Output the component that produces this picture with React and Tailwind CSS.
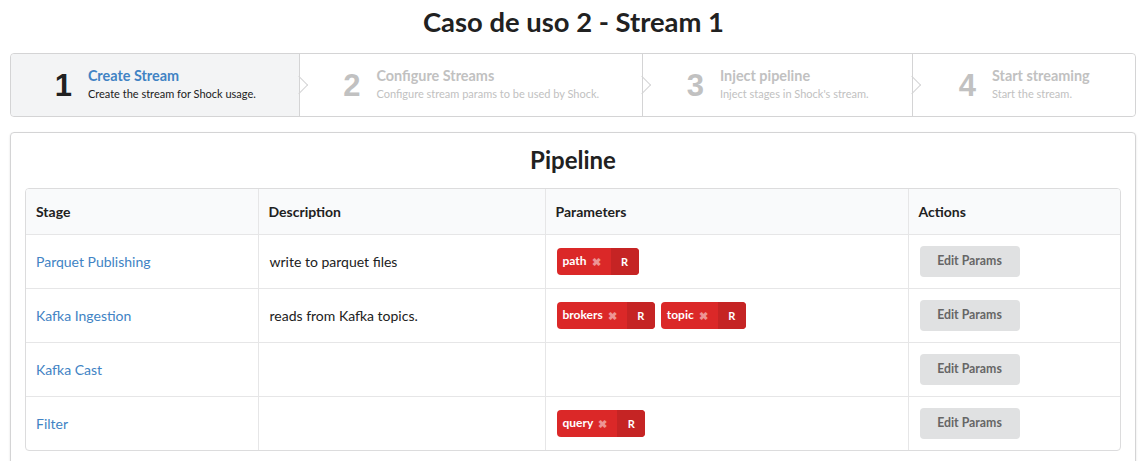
import React from "react";

const steps = [
  { n: "1", title: "Create Stream", desc: "Create the stream for Shock usage.", w: "w-[290px]", active: true },
  { n: "2", title: "Configure Streams", desc: "Configure stream params to be used by Shock.", w: "w-[343px]" },
  { n: "3", title: "Inject pipeline", desc: "Inject stages in Shock's stream.", w: "w-[271px]" },
  { n: "4", title: "Start streaming", desc: "Start the stream.", w: "w-[222px]", last: true },
];

const rows = [
  { stage: "Parquet Publishing", desc: "write to parquet files", params: ["path"] },
  { stage: "Kafka Ingestion", desc: "reads from Kafka topics.", params: ["brokers", "topic"] },
  { stage: "Kafka Cast", desc: "", params: [] },
  { stage: "Filter", desc: "", params: ["query"] },
];

function Label({ text }) {
  return (
    <span className="inline-flex items-stretch h-[27px] rounded-[4px] bg-[#db2828] text-white text-[12px] font-bold leading-none overflow-hidden">
      <span className="flex items-center pl-[6px] pr-[10px]">
        {text}
        <span className="ml-[5px] text-[11px] opacity-50">✖</span>
      </span>
      <span className="flex items-center justify-center w-[28px] bg-[#c52424] text-[11px]">R</span>
    </span>
  );
}

export default function App() {
  return (
    <div className="min-h-[461px] bg-white text-[14px] text-[#212121]" style={{ fontFamily: "Lato, 'Open Sans', sans-serif" }}>
      <h1 className="pt-[4px] mb-[13px] text-center text-[27.4px] leading-[36px] font-bold text-[#212121]">
        Caso de uso 2 - Stream 1
      </h1>

      <div className="ml-[10px] mr-[11px] flex h-[64px] border border-[#d4d4d5] rounded-[4px]">
        {steps.map((s, i) => (
          <div
            key={i}
            className={`relative flex items-center justify-center ${s.w} ${s.last ? "rounded-r-[4px]" : "border-r border-[#d4d4d5]"} ${s.active ? "bg-[#f3f4f5] rounded-l-[4px]" : "bg-white"}`}
          >
            <div className="flex items-center">
              <span
                className={`mr-[16px] text-[31px] font-bold leading-none ${s.active ? "text-[#212121]" : "text-[#c1c1c1]"}`}
                style={{ fontFamily: "'Liberation Sans', Arial, sans-serif" }}
              >
                {s.n}
              </span>
              <div className="flex flex-col mb-[2px]">
                <span className={`text-[14.4px] font-bold leading-[17px] ${s.active ? "text-[#4183c4]" : "text-[#c1c1c1]"}`}>{s.title}</span>
                <span className={`text-[11px] leading-[15px] mt-[2px] ${s.active ? "text-[#212121]" : "text-[#c1c1c1]"}`}>{s.desc}</span>
              </div>
            </div>
            {!s.last && (
              <span className="absolute right-0 top-1/2 z-10 w-[13px] h-[13px] border-t border-r border-[#d4d4d5] -translate-y-1/2 translate-x-1/2 rotate-45" />
            )}
          </div>
        ))}
      </div>

      <div className="mt-[15px] ml-[10px] mr-[11px] border border-[#d4d4d5] rounded-[4px] shadow-[0_1px_2px_0_rgba(34,36,38,0.15)] px-[14px] pt-[11px] pb-[14px] min-h-[340px]">
        <h2 className="text-center text-[24px] font-bold leading-[32px] text-[#212121] mb-[12px]">Pipeline</h2>
        <div className="border border-[#dcdcdd] rounded-[4px] overflow-hidden">
          <table className="w-full table-fixed border-collapse">
            <colgroup>
              <col className="w-[232px]" />
              <col className="w-[287px]" />
              <col className="w-[363px]" />
              <col />
            </colgroup>
            <thead>
              <tr className="bg-[#f9fafb]">
                {["Stage", "Description", "Parameters", "Actions"].map((h, i) => (
                  <th
                    key={h}
                    className={`h-[45px] pl-[10px] pr-[11px] text-left text-[14px] font-bold text-[#212121] ${i > 0 ? "border-l border-[#e6e6e7]" : ""}`}
                  >
                    {h}
                  </th>
                ))}
              </tr>
            </thead>
            <tbody>
              {rows.map((r, ri) => (
                <tr key={ri} className="border-t border-[#e6e6e7]">
                  <td className="h-[54px] pl-[10px] pr-[11px] text-[#4183c4]">{r.stage}</td>
                  <td className="pl-[11px] pr-[11px] border-l border-[#e6e6e7]">{r.desc}</td>
                  <td className="pl-[11px] pr-[11px] border-l border-[#e6e6e7]">
                    <div className="flex gap-[6px]">
                      {r.params.map((p) => (
                        <Label key={p} text={p} />
                      ))}
                    </div>
                  </td>
                  <td className="pl-[11px] pr-[11px] border-l border-[#e6e6e7]">
                    <button className="w-[100px] h-[31px] rounded-[4px] bg-[#e0e1e2] text-[12.3px] font-bold text-[#666666]">
                      Edit Params
                    </button>
                  </td>
                </tr>
              ))}
            </tbody>
          </table>
        </div>
      </div>
    </div>
  );
}
